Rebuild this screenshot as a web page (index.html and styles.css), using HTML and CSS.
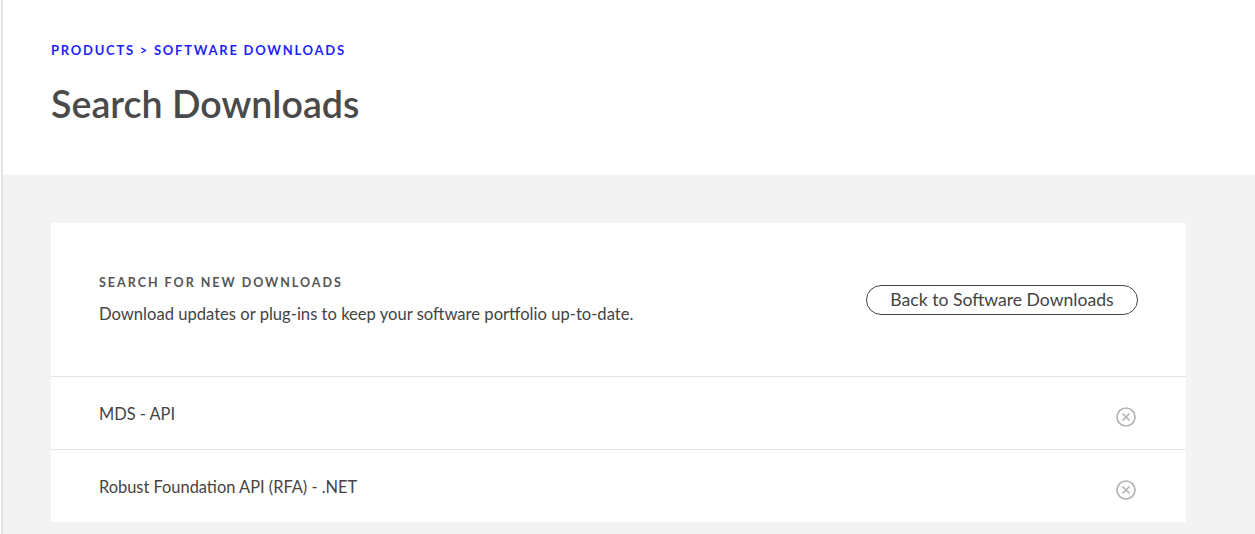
FILE: index.html
```html
<!DOCTYPE html>
<html lang="en">
<head>
    <meta charset="UTF-8">
    <meta name="viewport" content="width=device-width, initial-scale=1.0">
    <title>Search Downloads</title>
    <link rel="stylesheet" href="styles.css">
</head>
<body>
    <div class="page">
        <div class="hero">
            <div class="breadcrumb"><a href="#">Products</a> &gt; <a href="#">Software Downloads</a></div>
            <h1>Search Downloads</h1>
        </div>

        <div class="content">
            <div class="card">
                <div class="card-head">
                    <div>
                        <div class="label">Search for new downloads</div>
                        <p class="desc">Download updates or plug-ins to keep your software portfolio up-to-date.</p>
                    </div>
                    <button type="button" class="back-button">Back to Software Downloads</button>
                </div>

                <div class="row">
                    <span>MDS - API</span>
                    <svg class="remove" width="20" height="20" viewBox="0 0 20 20">
                        <circle cx="10" cy="10" r="9" fill="none" stroke="#b3b3b3" stroke-width="1.7"/>
                        <path d="M6.5 6.5 L13.5 13.5 M13.5 6.5 L6.5 13.5" stroke="#b3b3b3" stroke-width="1.7"/>
                    </svg>
                </div>
                <div class="row">
                    <span>Robust Foundation API (RFA) - .NET</span>
                    <svg class="remove" width="20" height="20" viewBox="0 0 20 20">
                        <circle cx="10" cy="10" r="9" fill="none" stroke="#b3b3b3" stroke-width="1.7"/>
                        <path d="M6.5 6.5 L13.5 13.5 M13.5 6.5 L6.5 13.5" stroke="#b3b3b3" stroke-width="1.7"/>
                    </svg>
                </div>
            </div>
        </div>
    </div>
</body>
</html>
```

FILE: styles.css
```css
body {
    margin: 0;
    font-family: 'Lato', 'Open Sans', sans-serif;
    color: #444;
    background: #fff;
}

.page {
    margin-left: 1px;
    border-left: 2px solid #e3e3e3;
    min-height: 100vh;
    background: #f3f3f3;
}

.hero {
    background: #fff;
    height: 175px;
    box-sizing: border-box;
    padding: 42px 48px 0;
}

.breadcrumb {
    font-size: 13px;
    font-weight: 700;
    letter-spacing: 1.75px;
    text-transform: uppercase;
    color: #1f1fff;
}

.breadcrumb a {
    color: #1f1fff;
    text-decoration: none;
}

h1 {
    margin: 23px 0 0;
    font-size: 37.6px;
    font-weight: 600;
    color: #4a4a4a;
    line-height: 1.2;
}

.content {
    padding: 48px 69px 0 48px;
}

.card {
    background: #fff;
}

.card-head {
    height: 153px;
    display: flex;
    align-items: center;
    justify-content: space-between;
    padding: 0 48px;
}

.label {
    font-size: 12.5px;
    font-weight: 700;
    letter-spacing: 2px;
    text-transform: uppercase;
    color: #555;
}

.desc {
    margin: 14px 0 0;
    font-size: 16.6px;
    color: #444;
}

.back-button {
    width: 272px;
    height: 30px;
    border: 1px solid #444;
    border-radius: 15px;
    background: #fff;
    font-family: inherit;
    font-size: 17.6px;
    color: #444;
    cursor: pointer;
}

.row {
    height: 72px;
    border-top: 1px solid #e6e6e6;
    display: flex;
    align-items: center;
    justify-content: space-between;
    padding: 0 50px 0 48px;
    font-size: 16.4px;
    color: #444;
}

.remove {
    margin-top: 8px;
}
```
